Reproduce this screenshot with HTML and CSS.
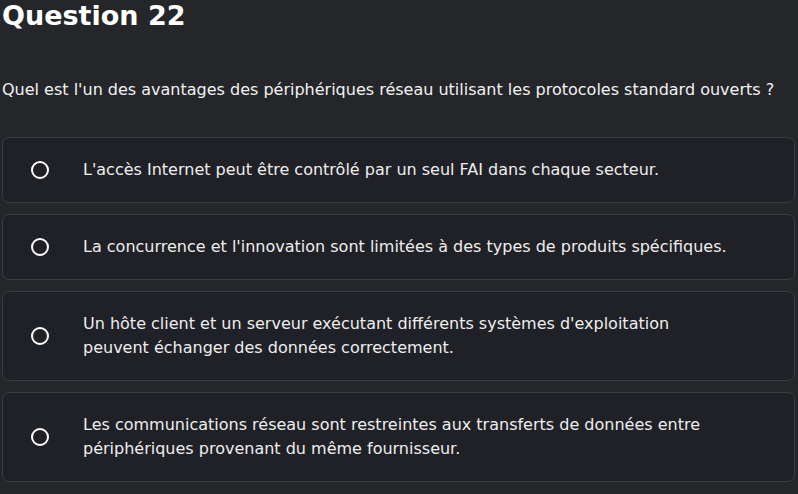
FILE: index.html
```html
<!DOCTYPE html>
<html lang="fr">
<head>
<meta charset="utf-8">
<link rel="stylesheet" href="styles.css">
</head>
<body>
<main class="quiz">
  <h1 class="title">Question 22</h1>
  <p class="question">Quel est l'un des avantages des périphériques réseau utilisant les protocoles standard ouverts ?</p>
  <ul class="options">
    <li class="option"><span class="radio"></span><span class="label">L'accès Internet peut être contrôlé par un seul FAI dans chaque secteur.</span></li>
    <li class="option"><span class="radio"></span><span class="label">La concurrence et l'innovation sont limitées à des types de produits spécifiques.</span></li>
    <li class="option"><span class="radio"></span><span class="label">Un hôte client et un serveur exécutant différents systèmes d'exploitation<br>peuvent échanger des données correctement.</span></li>
    <li class="option"><span class="radio"></span><span class="label">Les communications réseau sont restreintes aux transferts de données entre<br>périphériques provenant du même fournisseur.</span></li>
  </ul>
</main>
</body>
</html>
```

FILE: styles.css
```css
html, body {
  margin: 0;
  padding: 0;
  background: #25262a;
  color: #ffffff;
  font-family: "DejaVu Sans", sans-serif;
}
.quiz {
  padding: 0 3px 0 2px;
}
.title {
  margin: 0;
  font-size: 27px;
  line-height: 31px;
  font-weight: bold;
}
.question {
  margin: 47px 0 0 0;
  font-size: 16px;
  line-height: 24px;
  color: #f2f2f2;
}
.options {
  list-style: none;
  margin: 35px 0 0 0;
  padding: 0;
  display: flex;
  flex-direction: column;
  gap: 11px;
}
.option {
  display: flex;
  align-items: center;
  border: 1px solid #3b3c41;
  border-radius: 7px;
  background: #202126;
  padding: 20px 20px 20px 28px;
}
.radio {
  flex: none;
  width: 14px;
  height: 14px;
  border: 2px solid #ffffff;
  border-radius: 50%;
  margin-right: 34px;
}
.label {
  font-size: 16px;
  line-height: 24px;
  color: #eeeeee;
}
```
